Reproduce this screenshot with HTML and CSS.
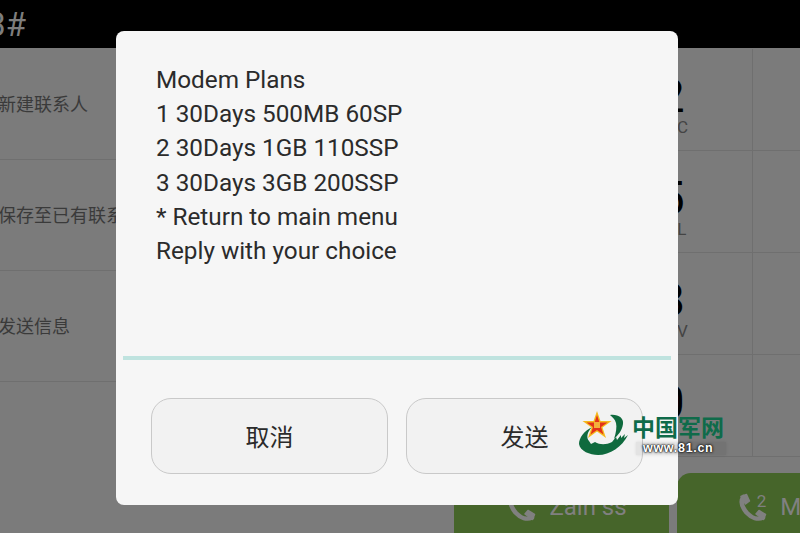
FILE: index.html
```html
<!DOCTYPE html>
<html lang="zh">
<head>
<meta charset="utf-8">
<title>Modem Plans</title>
<link rel="stylesheet" href="styles.css">
</head>
<body>
<div class="app">
  <header class="topbar"><span class="dialed">*123#</span></header>
  <main class="main">
    <nav class="actions">
      <div class="action">新建联系人</div>
      <div class="action">保存至已有联系人</div>
      <div class="action">发送信息</div>
    </nav>
    <section class="dialer">
      <div class="keypad">
        <div class="key"><b>1</b><span>&nbsp;</span></div>
        <div class="key"><b>2</b><span>ABC</span></div>
        <div class="key"><b>3</b><span>DEF</span></div>
        <div class="key"><b>4</b><span>GHI</span></div>
        <div class="key"><b>5</b><span>JKL</span></div>
        <div class="key"><b>6</b><span>MNO</span></div>
        <div class="key"><b>7</b><span>PQRS</span></div>
        <div class="key"><b>8</b><span>TUV</span></div>
        <div class="key"><b>9</b><span>WXYZ</span></div>
        <div class="key"><b>*</b><span>&nbsp;</span></div>
        <div class="key"><b>0</b><span>+</span></div>
        <div class="key"><b>#</b><span>&nbsp;</span></div>
      </div>
      <div class="calls">
        <div class="call call-one">
          <svg class="phone" viewBox="0 0 30 30"><path d="M6.500 4C3 8.500 5 14 9.500 19.500C14.500 25 21 27 26 24.500" /><path class="blob" d="M4 3.500L9.500 1.500L12.500 8L8.500 11ZM19 21L22 17.500L28.500 21.500L26.500 26.500Z"/></svg>
          <span>Zain ss</span>
        </div>
        <div class="call call-two">
          <svg class="phone" viewBox="0 0 30 30"><path d="M6.500 4C3 8.500 5 14 9.500 19.500C14.500 25 21 27 26 24.500" /><path class="blob" d="M4 3.500L9.500 1.500L12.500 8L8.500 11ZM19 21L22 17.500L28.500 21.500L26.500 26.500Z"/></svg>
          <sup class="sim">2</sup>
          <span>MTN</span>
        </div>
      </div>
    </section>
  </main>
</div>

<div class="dialog">
  <div class="message">
    <p>Modem Plans</p>
    <p>1 30Days 500MB 60SP</p>
    <p>2 30Days 1GB 110SSP</p>
    <p>3 30Days 3GB 200SSP</p>
    <p>* Return to main menu</p>
    <p>Reply with your choice</p>
  </div>
  <div class="input-line"></div>
  <div class="buttons">
    <button class="btn">取消</button>
    <button class="btn">发送</button>
  </div>
</div>

<div class="watermark">
  <svg class="emblem" viewBox="0 0 54 46">
    <path class="swoosh" d="M14 16C6 20 1 27 1 33C2 40 12 44 20 44C32 44 44 36 50 24L46 27L47 23L43 27L43 24L39 29L38 26L34 31C28 34 22 34 17 31L13 33L11 30C8 27 9 21 14 16Z"/>
    <path class="swoosh" d="M32 4C40 3 46 7 45 13C44 20 40 24 36 28C38 22 39 16 38 12C37 8 34 6 32 4Z"/>
    <polygon class="star-edge" points="19,0 22.500,10 33.500,10 24.500,16.500 28,27 19,20.500 10,27 13.500,16.500 4.500,10 15.500,10"/>
    <polygon class="star" points="19,4 21.500,11.500 29.500,11.500 23,16 25.500,23.500 19,19 12.500,23.500 15,16 8.500,11.500 16.500,11.500"/>
    <rect class="star-mark" x="16" y="11" width="6" height="6"/>
  </svg>
  <div class="mark-text">
    <div class="mark-name">中国军网</div>
    <div class="mark-url">www.81.cn</div>
  </div>
</div>
</body>
</html>
```
FILE: styles.css
```css
* { box-sizing: border-box; }
html, body { margin: 0; height: 100%; }
body {
  width: 800px;
  height: 533px;
  overflow: hidden;
  position: relative;
  background: #7b7b7b;
  font-family: Roboto, "Noto Sans CJK SC", sans-serif;
}
.app { display: flex; flex-direction: column; height: 533px; }
.topbar {
  height: 48px;
  background: #000;
  display: flex;
  align-items: center;
  color: #7d7d7d;
  font-size: 33px;
  overflow: hidden;
  white-space: nowrap;
}
.dialed { margin-left: -64px; }
.main { display: flex; flex: 1; min-height: 0; }
.actions { width: 430px; flex: none; padding-top: 1px; }
.action {
  height: 111px;
  border-bottom: 1px solid #6f6f6f;
  display: flex;
  align-items: center;
  margin-left: -2px;
  padding-bottom: 2px;
  font-size: 18px;
  color: #3a3a3a;
  font-family: "Noto Sans CJK SC", sans-serif;
}
.dialer { flex: 1; display: flex; flex-direction: column; min-width: 0; }
.keypad {
  width: 485px;
  padding-top: 1px;
  display: grid;
  grid-template-columns: 161.5px 161.5px 162px;
  grid-auto-rows: 102px;
}
.key {
  border-bottom: 1px solid #6f6f6f;
  border-right: 1px solid #6f6f6f;
  display: flex;
  flex-direction: column;
  align-items: center;
  padding-top: 22px;
  color: #000;
}
.key b { font-weight: 400; font-size: 46px; line-height: 50px; }
.key span { font-size: 17px; line-height: 19px; margin-top: -3px; color: #444; }
.calls { display: flex; gap: 8px; padding: 16px 0 0 24px; width: 560px; flex: 1; }
.call {
  width: 215px;
  height: 80px;
  background: #46652a;
  border-radius: 14px;
  display: flex;
  justify-content: center;
  align-items: flex-start;
  gap: 13px;
  padding: 20px 0 0 10px;
  font-size: 24px;
  color: #808080;
  flex: none;
}
.call-two { gap: 0; padding-left: 0; }
.phone { width: 30px; height: 30px; flex: none; }
.phone path { fill: none; stroke: #808080; stroke-width: 4.5; stroke-linecap: round; }
.phone .blob { fill: #808080; stroke: #808080; stroke-width: 1.500; stroke-linejoin: round; }
.sim { font-size: 17px; line-height: 16px; margin: 0 14px 0 -10px; }
.dialog {
  position: absolute;
  left: 116px;
  top: 31px;
  width: 562px;
  height: 474px;
  background: #f6f6f6;
  border-radius: 8px;
  padding: 32px 7px 0;
}
.message { padding-left: 33px; height: 293px; font-size: 24.3px; line-height: 34.2px; color: #2b2b2b; }
.message p { margin: 0; }
.input-line { height: 4px; background: #bfe3df; }
.buttons { display: flex; gap: 18px; padding: 38px 28px 0; }
.btn {
  width: 237px;
  height: 76px;
  background: #f2f2f2;
  border: 1px solid #c9c9c9;
  border-radius: 20px;
  font-family: "Noto Sans CJK SC", sans-serif;
  font-size: 24px;
  color: #2b2b2b;
  padding: 0 0 2px;
}
.watermark {
  position: absolute;
  left: 578px;
  top: 411px;
  display: flex;
  align-items: flex-start;
}
.emblem { width: 54px; height: 46px; flex: none; }
.swoosh { fill: #0f6a3e; }
.star-edge { fill: #f5b91c; }
.star { fill: #e3301a; }
.star-mark { fill: #f3b03a; }
.mark-text { margin-top: 1px; }
.mark-name {
  font-family: "Noto Sans CJK SC", sans-serif;
  font-weight: 700;
  font-size: 23px;
  line-height: 28px;
  color: #0f6b4a;
}
.mark-url {
  margin: 2px -2px 0 4px;
  padding-left: 7px;
  background: rgba(0, 0, 0, 0.06);
  box-shadow: 0 0 3px rgba(0, 0, 0, 0.1);
  font-family: "Liberation Sans", sans-serif;
  font-weight: 700;
  font-size: 12.5px;
  line-height: 13px;
  letter-spacing: 0.7px;
  color: #fff;
  text-shadow: 0 0 2px #111, 0 0 3px #111, 0 0 1px #111;
}
```
